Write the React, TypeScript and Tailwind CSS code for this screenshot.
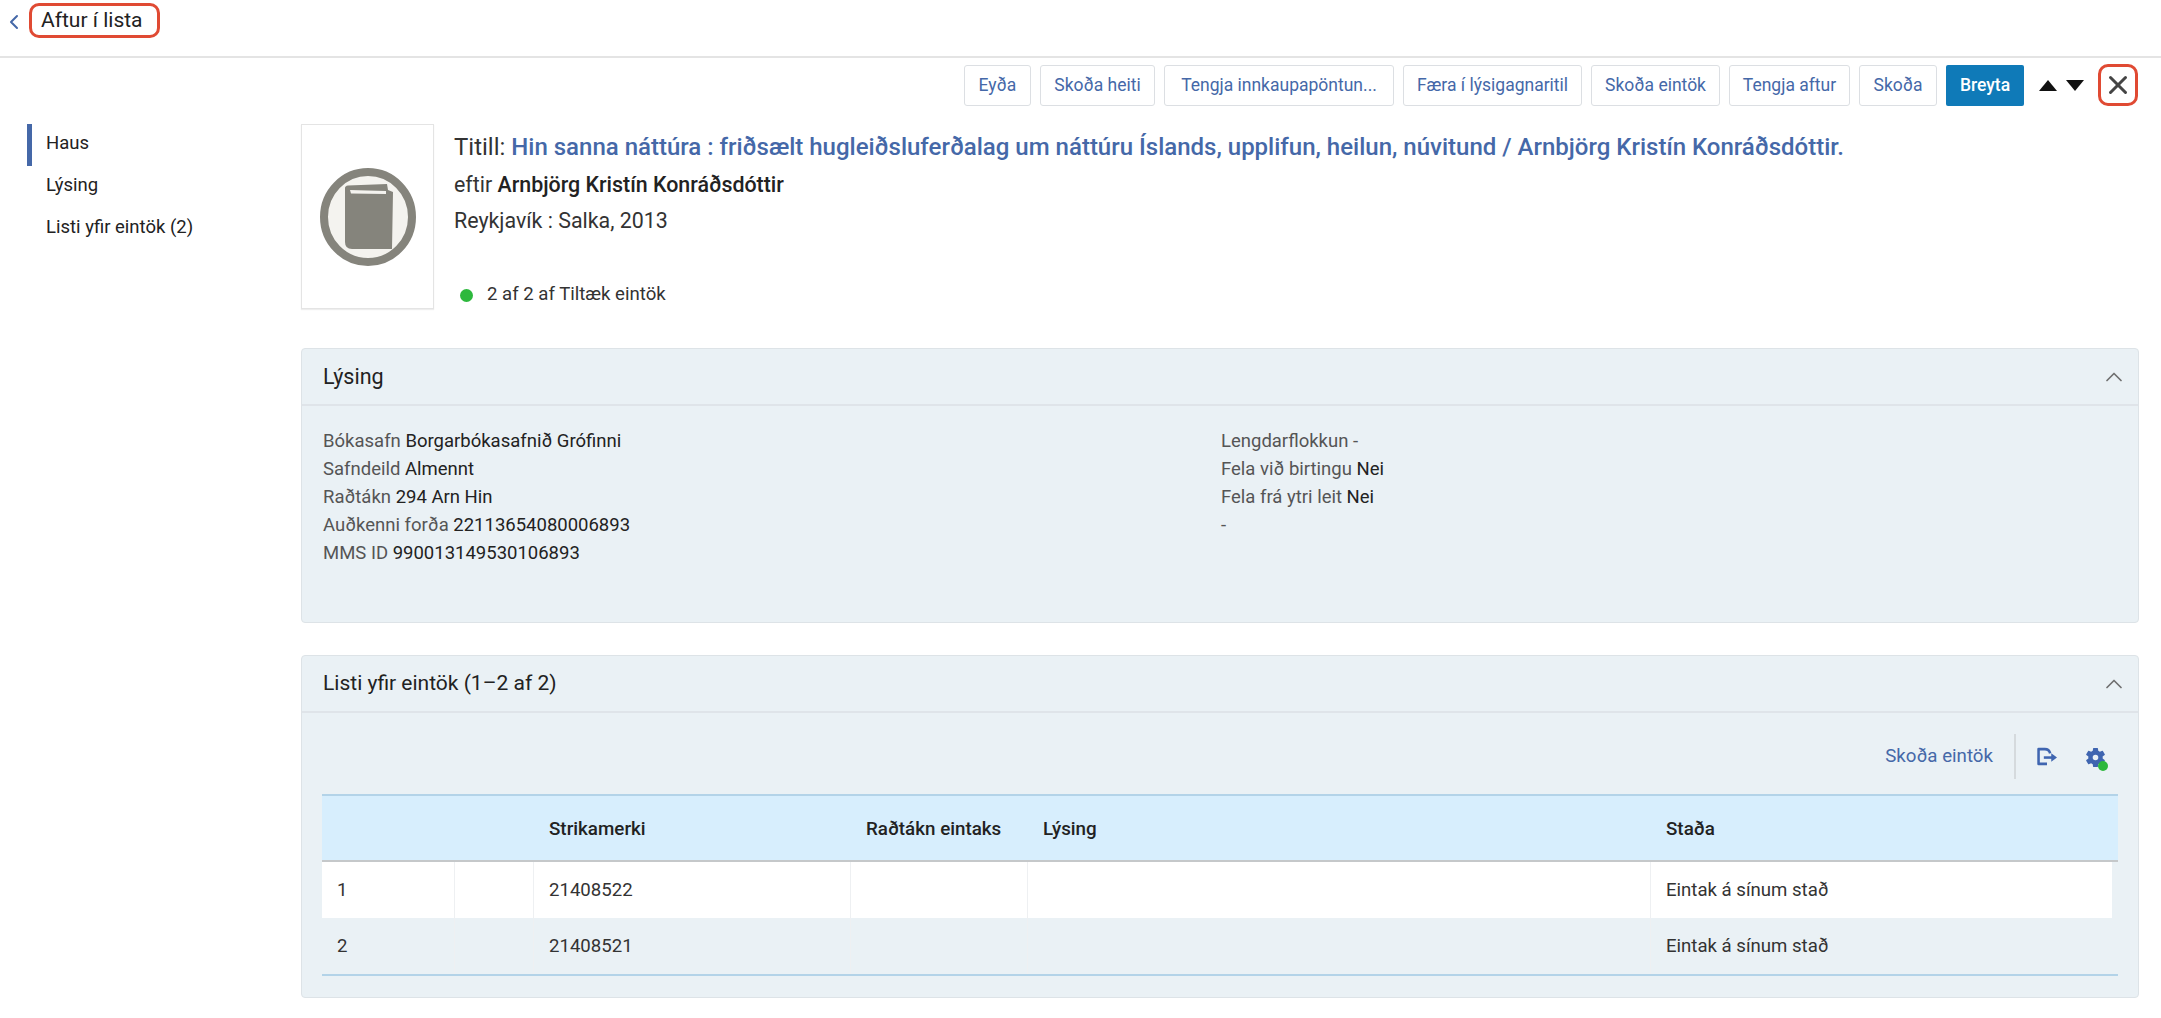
import { ChevronLeft, ChevronUp, X } from "lucide-react";

const buttons = ["Eyða", "Skoða heiti", "Tengja innkaupapöntun...", "Færa í lýsigagnaritil", "Skoða eintök", "Tengja aftur", "Skoða"];
const widths = ["w-[67px]", "w-[115px]", "w-[230px]", "w-[179px]", "w-[129px]", "w-[121px]", "w-[78px]"];

function BookIcon() {
  return (
    <svg viewBox="0 0 96 98" className="w-[96px] h-[98px]">
      <ellipse cx="48" cy="49" rx="44" ry="45" fill="#f4f3ef" stroke="#85847c" strokeWidth="8" />
      <path d="M25 20 Q25 18 28 17.5 L67 16 L68 22 L73 24 L72 81 L32 81 Q25 81 25 74 Z" fill="#85847c" />
      <path d="M30 22 L66 23 L66 26 L31 25.5 Z" fill="#f4f3ef" />
    </svg>
  );
}

function Panel({ title, size, children, className }: { title: string; size: string; children: React.ReactNode; className: string }) {
  return (
    <section className={`bg-[#eaf1f5] border border-[#dde3e7] rounded-[4px] flex flex-col ${className}`}>
      <header className={`h-[57px] shrink-0 border-b-2 border-[#dfe4e9] flex items-center justify-between pl-[21px] pr-[10px] text-[#222] ${size}`}>
        <span>{title}</span>
        <ChevronUp className="w-[28px] h-[28px] text-[#707070]" strokeWidth={1.5} />
      </header>
      {children}
    </section>
  );
}

function Field({ label, value }: { label: string; value: string }) {
  return (
    <div className="h-[28px] leading-[28px] text-[#555]">
      {label} <span className="text-[#222]">{value}</span>
    </div>
  );
}

const gridCols = "grid grid-cols-[133px_79px_317px_177px_623px_1fr]";

function Row({ n, code, white }: { n: string; code: string; white?: boolean }) {
  const cell = "border-r border-[#eef0f2] pl-[15px] pt-[2px] flex items-center";
  return (
    <div className={`${gridCols} mr-[6px] h-[56px] text-[#333] text-[18.6px] ${white ? "bg-white" : ""}`}>
      <div className={cell}>{n}</div>
      <div className={cell}></div>
      <div className={cell}>{code}</div>
      <div className={cell}></div>
      <div className={cell}></div>
      <div className="pl-[15px] pt-[2px] flex items-center">Eintak á sínum stað</div>
    </div>
  );
}

export default function App() {
  return (
    <div className="w-[2161px] h-[1018px] bg-white overflow-hidden text-[18.5px] text-[#222] font-['Roboto',sans-serif]">
      <div className="h-[58px] border-b-2 border-[#e4e4e4] flex items-start pl-[2px] pt-[3px]">
        <ChevronLeft className="w-[24px] h-[30px] mt-[4px] text-[#4568a8]" strokeWidth={2} />
        <div className="ml-[3px] w-[131px] h-[35px] border-[3px] border-[#e04a33] rounded-[10px] flex items-center pl-[9px] text-[21px] text-[#222]">
          Aftur í lista
        </div>
      </div>

      <div className="flex justify-end items-center gap-[9px] pr-[23px] pt-[6px]">
        {buttons.map((b, i) => (
          <button key={b} className={`${widths[i]} h-[41px] bg-white border border-[#dcdfe3] rounded-[3px] text-[17.5px] text-[#4568a8] shrink-0`}>
            {b}
          </button>
        ))}
        <button className="w-[78px] h-[41px] bg-[#0f7ab8] rounded-[2px] text-[17.5px] font-medium text-white shrink-0">Breyta</button>
        <div className="flex items-center gap-[9px] ml-[6px] mr-[5px] text-black">
          <svg viewBox="0 0 20 12" className="w-[18px] h-[11px]"><path d="M10 0 L20 12 L0 12 Z" fill="#111" /></svg>
          <svg viewBox="0 0 20 12" className="w-[18px] h-[11px]"><path d="M0 0 L20 0 L10 12 Z" fill="#111" /></svg>
        </div>
        <div className="w-[40px] h-[42px] border-[3px] border-[#e04a33] rounded-[10px] flex items-center justify-center">
          <X className="w-[30px] h-[30px] text-[#444]" strokeWidth={2.4} />
        </div>
      </div>

      <div className="flex mt-[18px]">
        <nav className="w-[301px] shrink-0 pl-[27px]">
          <div className="h-[42px] border-l-[5px] border-[#4568a8] pl-[14px] pb-[2px] flex items-center">Haus</div>
          <div className="h-[42px] pl-[19px] pb-[2px] flex items-center">Lýsing</div>
          <div className="h-[42px] pl-[19px] pb-[2px] flex items-center">Listi yfir eintök (2)</div>
        </nav>

        <main className="w-[1838px]">
          <div className="flex">
            <div className="w-[133px] h-[185px] border border-[#e4e4e4] shadow-[0_1px_1px_#eee] flex items-center justify-center shrink-0">
              <BookIcon />
            </div>
            <div className="ml-[20px] pt-[5px]">
              <div className="h-[36px] flex items-center text-[24px]">
                <span className="text-[#333]">Titill:&nbsp;</span>
                <span className="text-[#4568a8] font-medium">Hin sanna náttúra : friðsælt hugleiðsluferðalag um náttúru Íslands, upplifun, heilun, núvitund / Arnbjörg Kristín Konráðsdóttir.</span>
              </div>
              <div className="h-[36px] mt-[2px] flex items-center text-[21.4px] text-[#333]">
                eftir&nbsp;<span className="font-medium text-[#222]">Arnbjörg Kristín Konráðsdóttir</span>
              </div>
              <div className="h-[36px] flex items-center text-[21.4px] text-[#333]">Reykjavík : Salka, 2013</div>
              <div className="h-[30px] mt-[41px] flex items-center text-[18.6px] text-[#333]">
                <span className="w-[13px] h-[13px] rounded-full bg-[#2db83d] ml-[6px] mr-[14px]"></span>
                2 af 2 af Tiltæk eintök
              </div>
            </div>
          </div>

          <Panel title="Lýsing" size="text-[21.5px] pt-[1px]" className="mt-[38px] h-[275px]">
            <div className="grid grid-cols-[898px_1fr] pl-[21px] pt-[21px] text-[18.5px]">
              <div>
                <Field label="Bókasafn" value="Borgarbókasafnið Grófinni" />
                <Field label="Safndeild" value="Almennt" />
                <Field label="Raðtákn" value="294 Arn Hin" />
                <Field label="Auðkenni forða" value="22113654080006893" />
                <Field label="MMS ID" value="990013149530106893" />
              </div>
              <div>
                <Field label="Lengdarflokkun -" value="" />
                <Field label="Fela við birtingu" value="Nei" />
                <Field label="Fela frá ytri leit" value="Nei" />
                <Field label="-" value="" />
              </div>
            </div>
          </Panel>

          <Panel title="Listi yfir eintök (1–2 af 2)" size="text-[21px]" className="mt-[32px] h-[343px]">
            <div className="px-[20px]">
              <div className="h-[45px] mt-[21px] flex items-center justify-end pr-[13px]">
                <span className="text-[#4568a8] text-[18.7px]">Skoða eintök</span>
                <span className="w-[2px] h-[45px] bg-[#d5dadd] ml-[21px] mr-[20px]"></span>
                <svg viewBox="0 0 20 18" className="w-[22px] h-[19px]" fill="none" stroke="#3f65b0" strokeWidth="2.4" strokeLinejoin="round">
                  <path d="M10 16 H2 V2 H8 Q12 2 13 6" />
                  <path d="M7 10 H15" />
                  <path d="M14 6 L19.5 10 L14 14 Z" fill="#3f65b0" strokeWidth="0" />
                </svg>
                <div className="relative ml-[27px] w-[20px] h-[20px]">
                  <svg viewBox="1.5 1.5 21 21" className="w-[21px] h-[21px]" fill="#3f65b0">
                    <path d="M19.14 12.94c.04-.3.06-.61.06-.94s-.02-.64-.07-.94l2.03-1.58a.49.49 0 0 0 .12-.61l-1.92-3.32a.49.49 0 0 0-.59-.22l-2.39.96a7 7 0 0 0-1.62-.94l-.36-2.54a.48.48 0 0 0-.48-.41h-3.84a.48.48 0 0 0-.47.41l-.36 2.54c-.59.24-1.13.57-1.62.94l-2.39-.96a.48.48 0 0 0-.59.22L2.74 8.87a.48.48 0 0 0 .12.61l2.03 1.58c-.05.3-.09.63-.09.94s.02.64.07.94l-2.03 1.58a.49.49 0 0 0-.12.61l1.92 3.32c.12.22.37.29.59.22l2.39-.96c.5.38 1.03.7 1.62.94l.36 2.54c.05.24.24.41.48.41h3.84c.24 0 .44-.17.47-.41l.36-2.54c.59-.24 1.13-.56 1.62-.94l2.39.96c.22.08.47 0 .59-.22l1.92-3.32a.48.48 0 0 0-.12-.61l-2.01-1.58ZM12 14.8A2.8 2.8 0 1 1 12 9.2a2.8 2.8 0 0 1 0 5.6Z" />
                  </svg>
                  <span className="absolute right-[-3px] bottom-[-4px] w-[10px] h-[10px] rounded-full bg-[#2db83d]"></span>
                </div>
              </div>
              <div className="mt-[15px] border-t-2 border-[#b3d3e8] border-b-2 border-b-[#b3d3e8]">
                <div className={`${gridCols} h-[66px] bg-[#d7eefd] border-b-2 border-[#c5c8ca] font-medium items-center text-[#222] text-[18.8px]`}>
                  <div></div>
                  <div></div>
                  <div className="pl-[15px] pt-[2px]">Strikamerki</div>
                  <div className="pl-[15px] pt-[2px] whitespace-nowrap">Raðtákn eintaks</div>
                  <div className="pl-[15px] pt-[2px]">Lýsing</div>
                  <div className="pl-[15px] pt-[2px]">Staða</div>
                </div>
                <Row n="1" code="21408522" white />
                <Row n="2" code="21408521" />
              </div>
            </div>
          </Panel>
        </main>
      </div>
    </div>
  );
}
